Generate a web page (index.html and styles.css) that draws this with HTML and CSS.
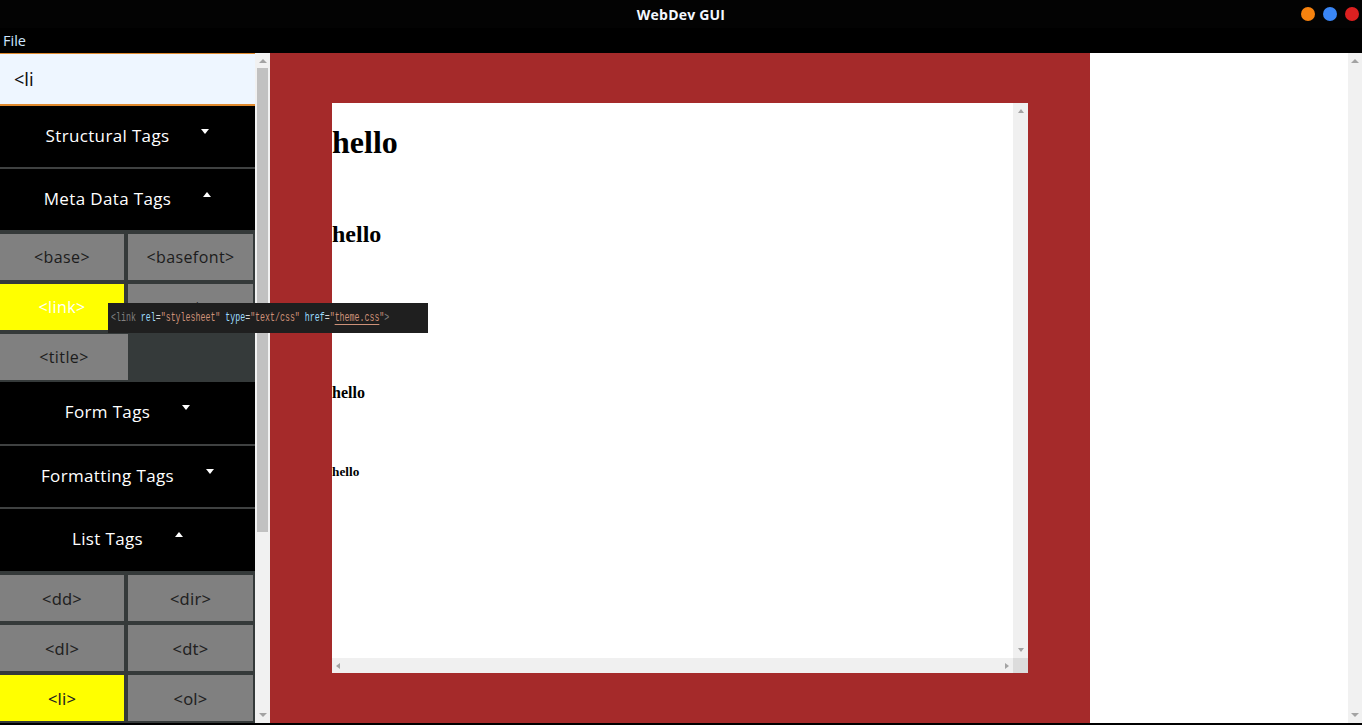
FILE: index.html
```html
<!DOCTYPE html>
<html lang="en">
<head>
<meta charset="utf-8">
<title>WebDev GUI</title>
<link rel="stylesheet" href="styles.css">
</head>
<body>
<div class="window">
  <header class="titlebar">
    <div class="tb-spacer"></div>
    <div class="title">WebDev GUI</div>
    <div class="controls">
      <span class="dot dot-orange"></span>
      <span class="dot dot-blue"></span>
      <span class="dot dot-red"></span>
    </div>
  </header>
  <nav class="menubar"><span class="menu-item">File</span></nav>
  <main class="main">
    <aside class="sidebar">
      <div class="sidebar-content">
        <div class="search">&lt;li</div>
        <div class="acc-head bordered"><span class="acc-label">Structural Tags</span><span class="caret caret-down"></span></div>
        <div class="acc-head"><span class="acc-label">Meta Data Tags</span><span class="caret caret-up"></span></div>
        <div class="tag-grid">
          <button class="tag">&lt;base&gt;</button>
          <button class="tag tag-r">&lt;basefont&gt;</button>
          <button class="tag tag-hit">&lt;link&gt;</button>
          <button class="tag tag-r">&lt;meta&gt;</button>
          <button class="tag tag-wide">&lt;title&gt;</button>
        </div>
        <div class="acc-head tall bordered"><span class="acc-label">Form Tags</span><span class="caret caret-down"></span></div>
        <div class="acc-head bordered"><span class="acc-label">Formatting Tags</span><span class="caret caret-down"></span></div>
        <div class="acc-head tall"><span class="acc-label">List Tags</span><span class="caret caret-up"></span></div>
        <div class="tag-grid">
          <button class="tag tag-alt">&lt;dd&gt;</button>
          <button class="tag tag-r tag-alt">&lt;dir&gt;</button>
          <button class="tag tag-alt">&lt;dl&gt;</button>
          <button class="tag tag-r tag-alt">&lt;dt&gt;</button>
          <button class="tag tag-hit tag-alt tag-dark">&lt;li&gt;</button>
          <button class="tag tag-r tag-alt">&lt;ol&gt;</button>
        </div>
      </div>
      <div class="vscroll">
        <span class="arr arr-up"></span>
        <span class="thumb"></span>
        <span class="vs-fill"></span>
        <span class="arr arr-down"></span>
      </div>
    </aside>
    <section class="preview">
      <div class="frame">
        <div class="frame-top">
          <div class="doc">
            <h1>hello</h1><br>
            <h2>hello</h2><br>
            <h3>hello</h3><br>
            <h4>hello</h4><br>
            <h5>hello</h5>
          </div>
          <div class="fvbar">
            <span class="sarr sarr-up"></span>
            <span class="sarr sarr-down"></span>
          </div>
        </div>
        <div class="fhbar-row">
          <div class="fhbar">
            <span class="sarr sarr-left"></span>
            <span class="sarr sarr-right"></span>
          </div>
          <div class="corner"></div>
        </div>
      </div>
    </section>
    <aside class="right">
      <div class="right-content"></div>
      <div class="vscroll narrow">
        <span class="arr arr-up"></span>
        <span class="vs-fill"></span>
        <span class="arr arr-down"></span>
      </div>
    </aside>
  </main>
  <div class="taskbar"></div>
  <div class="tooltip"><span class="code"><span class="tk-tag">&lt;link</span> <span class="tk-attr">rel</span><span class="tk-eq">=</span><span class="tk-str">"stylesheet"</span> <span class="tk-attr">type</span><span class="tk-eq">=</span><span class="tk-str">"text/css"</span> <span class="tk-attr">href</span><span class="tk-eq">=</span><span class="tk-str">"<span class="tk-link">theme.css</span>"</span><span class="tk-tag">&gt;</span></span></div>
</div>
</body>
</html>
```
FILE: styles.css
```css
* { box-sizing: border-box; }
html, body { margin: 0; padding: 0; background: #000; }
body { font-family: "Open Sans", "Noto Sans", sans-serif; }

.window {
  width: 1362px;
  height: 725px;
  position: relative;
  overflow: hidden;
  display: flex;
  flex-direction: column;
  background: #000;
}

/* title bar */
.titlebar {
  height: 28px;
  flex: none;
  display: grid;
  grid-template-columns: 1fr auto 1fr;
  align-items: center;
  background: #030303;
}
.title {
  color: #f4f8ff;
  font-weight: 700;
  font-size: 14px;
  letter-spacing: 0.2px;
}
.controls {
  justify-self: end;
  display: flex;
  gap: 8px;
  padding-right: 3px;
}
.dot { width: 14px; height: 14px; border-radius: 50%; display: block; }
.dot-orange { background: #f7820e; }
.dot-blue { background: #3a86f5; }
.dot-red { background: #dc2020; }

/* menu bar */
.menubar {
  height: 25px;
  flex: none;
  display: flex;
  align-items: center;
  padding-left: 3px;
  background: #000;
}
.menu-item { color: #cfe6ff; font-size: 14.5px; }

/* main */
.main { display: flex; height: 670px; flex: none; }

.sidebar { width: 270px; display: flex; flex: none; }
.sidebar-content {
  width: 255px;
  overflow: hidden;
  background: #353a3a;
}
.search {
  height: 53px;
  background: #eef6ff;
  border-top: 1px solid #e08a2e;
  border-bottom: 2px solid #e08a2e;
  padding-left: 14px;
  display: flex;
  align-items: center;
  font-size: 18px;
  color: #111;
  font-family: "Noto Sans", "Open Sans", sans-serif;
}
.acc-head {
  height: 61px;
  background: #000;
  display: flex;
  justify-content: center;
  align-items: center;
  gap: 32px;
  color: #fff;
  font-size: 17px;
  letter-spacing: 0.35px;
  font-family: "Open Sans", sans-serif;
  padding-bottom: 3px;
}
.acc-head.tall { height: 62px; }
.acc-head.bordered { border-bottom: 2px solid #3f4141; height: 63px; }
.acc-head.tall.bordered { height: 64px; }
.caret {
  width: 0; height: 0;
  border-left: 4.5px solid transparent;
  border-right: 4.5px solid transparent;
  margin-bottom: 8px;
}
.caret-down { border-top: 5px solid #fff; }
.caret-up { border-bottom: 5px solid #fff; }

.tag-grid {
  display: flex;
  flex-wrap: wrap;
  gap: 4px;
  padding: 4px 2px 2px 0;
  background: #353a3a;
}
.tag {
  width: 124px;
  height: 46px;
  border: none;
  margin: 0;
  padding: 0;
  background: #808080;
  color: #1c1c1c;
  font-family: "Open Sans", sans-serif;
  font-size: 16px;
  letter-spacing: 0.4px;
  font-weight: 400;
}
.tag-r { width: 125px; }
.tag-wide { width: 128px; }
.tag-hit { background: #ffff00; color: #fff; }
.tag-alt { font-family: "Noto Sans", "Open Sans", sans-serif; color: #222; font-size: 16.5px; letter-spacing: 0.2px; }
.tag-dark { color: #222; }

/* scrollbars */
.vscroll {
  width: 15px;
  flex: none;
  background: #f1f1f1;
  display: flex;
  flex-direction: column;
  align-items: center;
}
.vscroll.narrow { width: 14px; }
.arr {
  flex: none;
  width: 0; height: 0;
  border-left: 4px solid transparent;
  border-right: 4px solid transparent;
}
.arr-up { border-bottom: 4px solid #a3a3a3; margin: 6px 0 5px; }
.arr-down { border-top: 4px solid #a3a3a3; margin: 5px 0 6px; }
.thumb {
  flex: none;
  width: 11px;
  height: 464px;
  background: #c1c1c1;
}
.vs-fill { flex: 1; }

/* preview */
.preview {
  width: 820px;
  flex: none;
  background: #a52a2a;
  padding: 50px 62px;
}
.frame {
  width: 696px;
  height: 570px;
  display: flex;
  flex-direction: column;
  background: #fff;
}
.frame-top { flex: 1; display: flex; min-height: 0; }
.doc {
  flex: 1;
  overflow: hidden;
  font-family: "Liberation Serif", "Times New Roman", serif;
  font-size: 16px;
  color: #000;
  display: flow-root;
}
.doc h1 { font-size: 32px; margin: 21.44px 0; }
.doc h2 { font-size: 24px; margin: 19.92px 0; }
.doc h3 { font-size: 18.72px; margin: 18.72px 0; }
.doc h4 { font-size: 16px; margin: 21.28px 0; }
.doc h5 { font-size: 13.28px; margin: 22.18px 0; }

.fvbar {
  width: 15px;
  background: #f0f0f0;
  display: flex;
  flex-direction: column;
  align-items: center;
  justify-content: space-between;
}
.fhbar-row { height: 15px; display: flex; flex: none; }
.fhbar {
  flex: 1;
  background: #f0f0f0;
  display: flex;
  align-items: center;
  justify-content: space-between;
  padding: 0 4px;
}
.corner { width: 15px; background: #dcdcdc; }
.sarr { width: 0; height: 0; display: block; }
.sarr-up {
  border-left: 3.5px solid transparent;
  border-right: 3.5px solid transparent;
  border-bottom: 4px solid #a3a3a3;
  margin-top: 6px;
}
.sarr-down {
  border-left: 3.5px solid transparent;
  border-right: 3.5px solid transparent;
  border-top: 4px solid #a3a3a3;
  margin-bottom: 6px;
}
.sarr-left {
  border-top: 3.5px solid transparent;
  border-bottom: 3.5px solid transparent;
  border-right: 4px solid #a3a3a3;
}
.sarr-right {
  border-top: 3.5px solid transparent;
  border-bottom: 3.5px solid transparent;
  border-left: 4px solid #a3a3a3;
}

/* right panel */
.right { flex: 1; display: flex; }
.right-content { flex: 1; background: #fff; }

.taskbar { flex: 1; background: #000; }

/* tooltip */
.tooltip {
  position: absolute;
  left: 108px;
  top: 303px;
  width: 320px;
  height: 30px;
  background: #1f1f1f;
  padding-left: 3px;
  display: flex;
  align-items: center;
  overflow: hidden;
}
.code {
  display: inline-block;
  white-space: pre;
  font-family: "Liberation Mono", "DejaVu Sans Mono", monospace;
  font-size: 12px;
  transform: scaleX(0.69);
  transform-origin: left center;
  color: #d4d4d4;
}
.tk-tag { color: #808080; }
.tk-attr { color: #9cdcfe; }
.tk-eq { color: #d4d4d4; }
.tk-str { color: #ce9178; }
.tk-link {
  text-decoration: underline;
  text-decoration-color: #ce9178;
  text-underline-offset: 3px;
}
```
